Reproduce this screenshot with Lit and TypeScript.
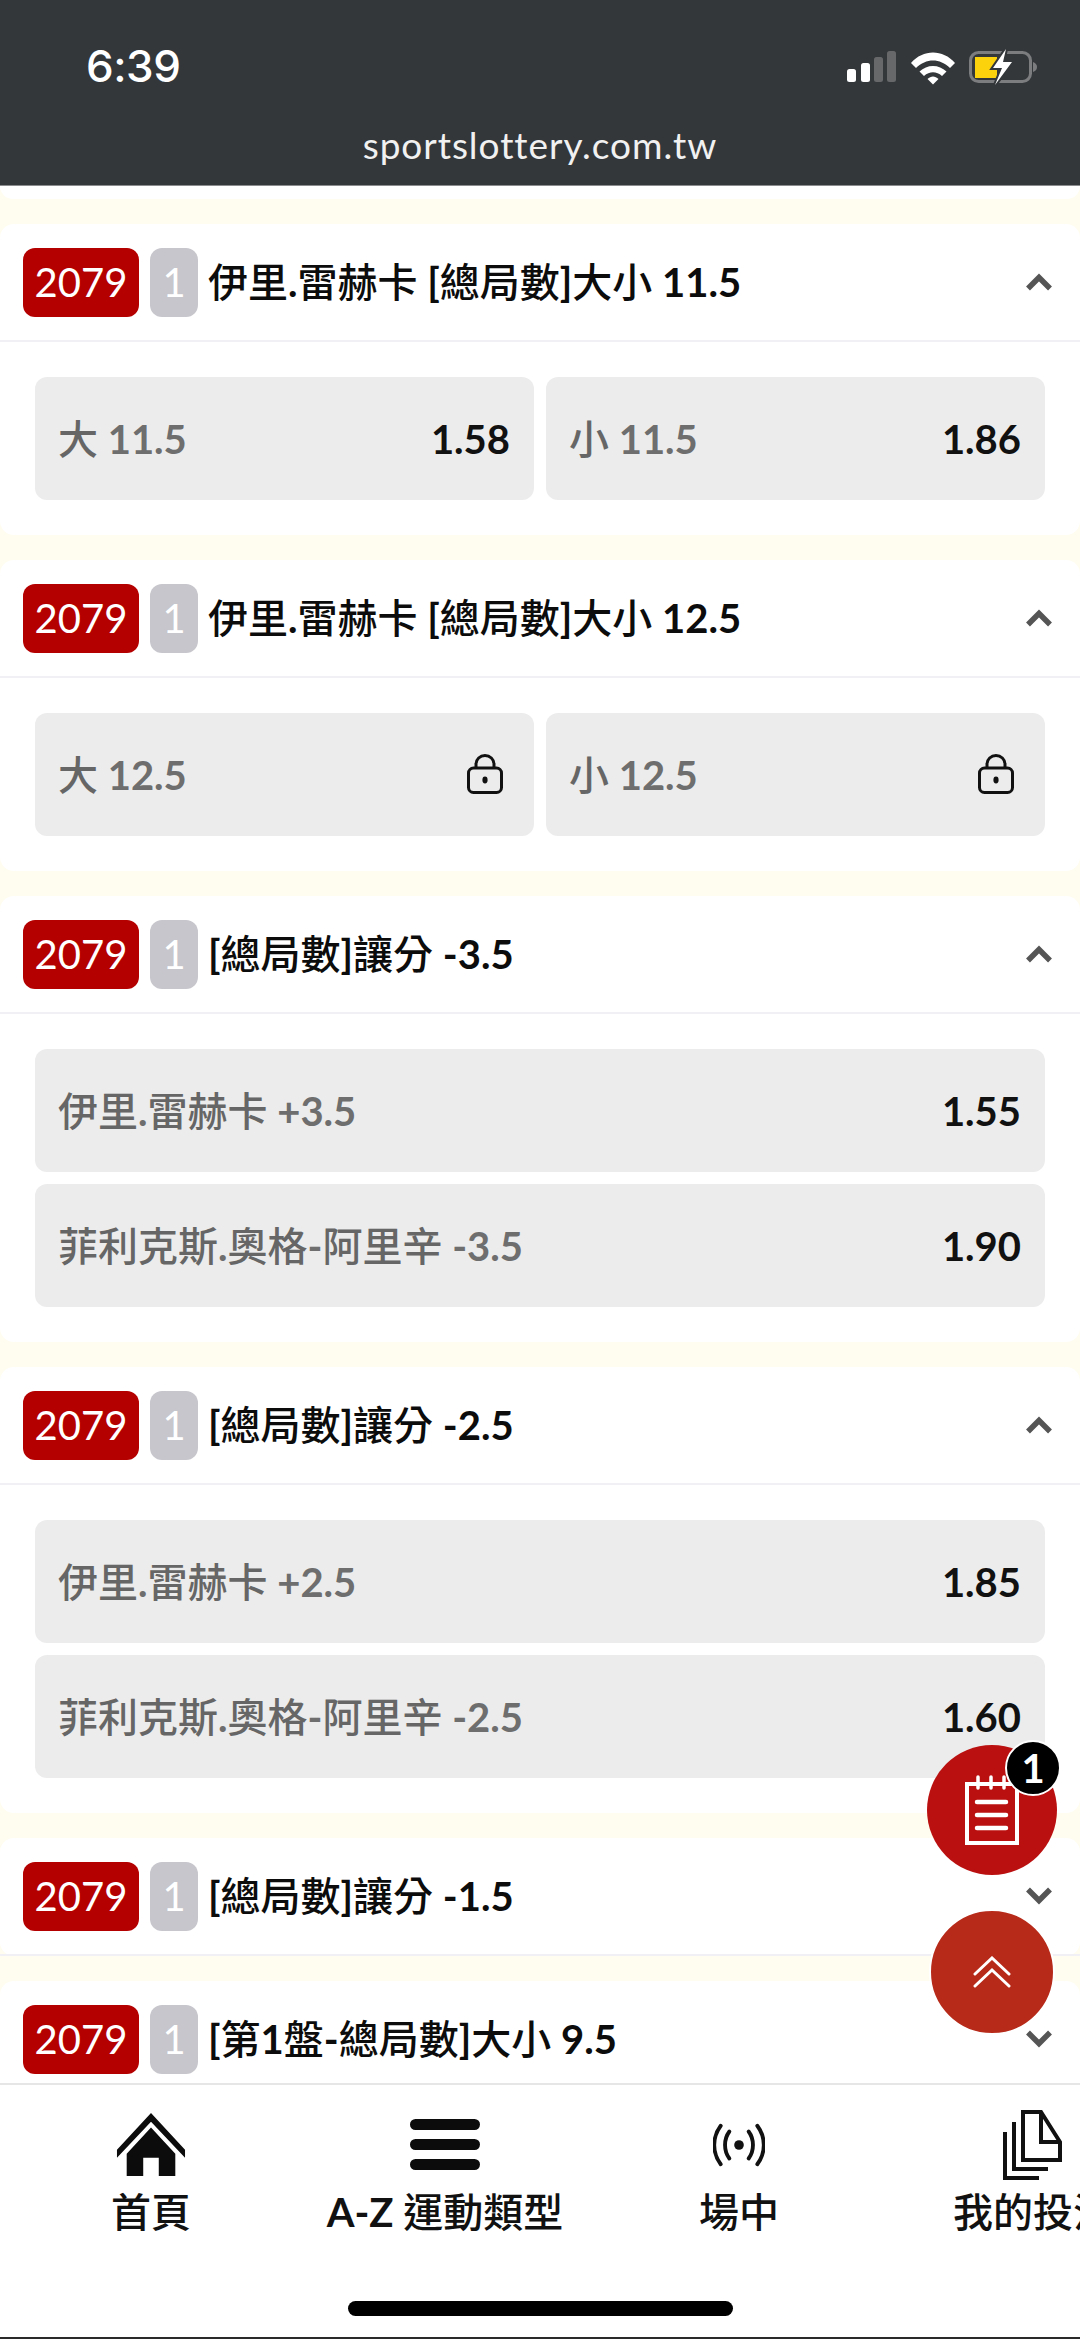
import { LitElement, html, css, svg } from "lit";
import { customElement } from "lit/decorators.js";

type Opt = { label: string; odds?: string };
type Market = { title: string; open: boolean; layout?: "row" | "col"; opts?: Opt[] };

const markets: Market[] = [
  { title: "伊里.雷赫卡 [總局數]大小 11.5", open: true, layout: "row", opts: [{ label: "大 11.5", odds: "1.58" }, { label: "小 11.5", odds: "1.86" }] },
  { title: "伊里.雷赫卡 [總局數]大小 12.5", open: true, layout: "row", opts: [{ label: "大 12.5" }, { label: "小 12.5" }] },
  { title: "[總局數]讓分 -3.5", open: true, layout: "col", opts: [{ label: "伊里.雷赫卡 +3.5", odds: "1.55" }, { label: "菲利克斯.奧格-阿里辛 -3.5", odds: "1.90" }] },
  { title: "[總局數]讓分 -2.5", open: true, layout: "col", opts: [{ label: "伊里.雷赫卡 +2.5", odds: "1.85" }, { label: "菲利克斯.奧格-阿里辛 -2.5", odds: "1.60" }] },
  { title: "[總局數]讓分 -1.5", open: false },
  { title: "[第1盤-總局數]大小 9.5", open: false },
];

/* Latin runs take Lato bold, CJK runs stay at the container's medium weight. */
const runs = (text: string) =>
  text.split(/([\u0020-\u007e]+)/).filter(Boolean).map((r) => (/^[\u0020-\u007e]+$/.test(r) ? html`<b>${r}</b>` : r));

const lock = svg`<svg class="lock" viewBox="0 0 36 40" width="36" height="40"><rect x="1.5" y="14" width="33" height="24.5" rx="5" fill="none" stroke="#111" stroke-width="3"/><path d="M9 14V10a9 8.5 0 0 1 18 0v4" fill="none" stroke="#111" stroke-width="3"/><ellipse cx="18" cy="26" rx="2.6" ry="3.4" fill="#111"/></svg>`;

@customElement("app-root")
export class AppRoot extends LitElement {
  static styles = css`
    :host { display: flex; flex-direction: column; position: relative; width: 1080px; height: 2339px; overflow: hidden; background: #fff;
      font-family: Lato, "Noto Sans CJK TC", sans-serif; color: #111; }
    .top { flex: none; height: 185px; background: #34373a; border-bottom: 1px solid #8a8c8e; box-sizing: content-box; display: flex; flex-direction: column; color: #fff; }
    .status { display: flex; align-items: center; justify-content: space-between; height: 50px; margin-top: 41px; padding: 0 41px 0 86px; }
    .time { font: 500 44px/50px Inter, sans-serif; letter-spacing: -0.5px; }
    .icons { display: flex; align-items: center; margin-top: 2px; }
    .url { text-align: center; font: 400 37px/44px Lato, sans-serif; letter-spacing: 0.95px; color: #f1f1f1; margin-top: 32px; }
    main { flex: 1; min-height: 0; overflow: hidden; background: #fffdf0; display: flex; flex-direction: column; gap: 25px; }
    .tail { flex: none; height: 13px; background: #fff; border-radius: 0 0 14px 14px; }
    .card { flex: none; background: #fff; border-radius: 14px; }
    .head { height: 116px; border-bottom: 2px solid #f0f0f5; display: flex; align-items: center; padding: 0 28px 0 23px; }
    .num, .set { flex: none; height: 69px; border-radius: 12px; color: #fff; display: flex; align-items: center; justify-content: center; font-size: 40px; box-sizing: border-box; }
    .num { width: 116px; background: #b50000; }
    .set { width: 48px; margin-left: 11px; background: #c6c6cc; }
    .title { flex: 1; margin-left: 10px; margin-top: -4px; font-size: 40px; font-weight: 500; white-space: nowrap; color: #0c0c0c; }
    .title b { font-weight: 700; }
    .body { padding: 35px; display: flex; gap: 12px; }
    .body.col { flex-direction: column; }
    .opt { flex: 1 0 123px; height: 123px; box-sizing: border-box; background: #ececec; border-radius: 12px; display: flex; align-items: center; justify-content: space-between; padding: 0 24px 0 23px; }
    .body.row .opt { flex: 1 1 0; }
    .label { font-size: 40px; font-weight: 500; color: #666; margin-top: -3px; }
    .label b { font-weight: 700; color: #6e6e6e; }
    .odds { font-size: 40px; font-weight: 700; color: #111; }
    .lock { margin: -2px 7px 0 0; display: block; }
    nav { flex: none; height: 256px; border-top: 2px solid #e6e6e6; background: #fff; position: relative; display: flex; padding-left: 4px; box-sizing: border-box; overflow: hidden; border-bottom: 2px solid #2a2a2a; }
    .tab { flex: none; width: 294px; height: 130px; margin-top: 22px; display: flex; flex-direction: column; align-items: center; }
    .ico { height: 76px; display: flex; align-items: center; justify-content: center; }
    .tab span { font-size: 40px; line-height: 46px; font-weight: 500; white-space: nowrap; margin-top: 6px; color: #111; }
    .tab span b { font-weight: 700; }
    .home-bar { position: absolute; left: 348px; bottom: 21px; width: 385px; height: 15px; border-radius: 8px; background: #000; }
    .fab { position: absolute; border-radius: 50%; display: flex; align-items: center; justify-content: center; }
    .fab.slip { left: 927px; top: 1745px; width: 130px; height: 130px; background: #bb1010; }
    .count { position: absolute; left: 1005px; top: 1740px; width: 56px; height: 56px; box-sizing: border-box; border: 2px solid #fff; border-radius: 50%; background: #000; color: #fff; font-size: 40px; font-weight: 700; display: flex; align-items: center; justify-content: center; }
    .fab.up { left: 929px; top: 1909px; width: 126px; height: 126px; box-sizing: border-box; border: 2px solid #fff; background: #b72a1a; }
  `;

  private chev(open: boolean) {
    return html`<svg width="26" height="18" viewBox="0 0 26 18"><path d=${open ? "M2 15.5 L13 4.5 L24 15.5" : "M2 2.5 L13 13.5 L24 2.5"} fill="none" stroke="#555" stroke-width="5.5"/></svg>`;
  }

  private card(m: Market) {
    return html`<section class="card">
      <div class="head"><div class="num">2079</div><div class="set">1</div><div class="title">${runs(m.title)}</div>${this.chev(m.open)}</div>
      ${m.open ? html`<div class="body ${m.layout}">${m.opts!.map((o) => html`<div class="opt"><span class="label">${runs(o.label)}</span>${o.odds ? html`<span class="odds">${o.odds}</span>` : lock}</div>`)}</div>` : ""}
    </section>`;
  }

  render() {
    return html`
      <header class="top">
        <div class="status">
          <div class="time">6:39</div>
          <div class="icons">
            <svg width="192" height="36" viewBox="0 0 192 36">
              <rect x="0" y="20" width="9" height="13" rx="2.5" fill="#fff"/><rect x="14" y="14" width="9" height="19" rx="2.5" fill="#fff"/>
              <rect x="27" y="8" width="9" height="25" rx="2.5" fill="#66686a"/><rect x="40" y="2" width="9" height="31" rx="2.5" fill="#66686a"/>
              <path d="M64 14 C76 0 96 0 108 14 L103 19 C93 9 79 9 69 19Z" fill="#fff"/><path d="M72.5 22.5 C80 15 92 15 99.5 22.5 L95 27 C89.5 22 82.5 22 77 27Z" fill="#fff"/><path d="M80.5 30 C84 26.5 88 26.5 91.5 30 L86 35.5Z" fill="#fff"/>
              <rect x="123.5" y="3.5" width="60" height="29" rx="8" fill="none" stroke="#7b7d7f" stroke-width="3"/>
              <path d="M186 13 C189 14 190 16 190 18 C190 20 189 22 186 23Z" fill="#7b7d7f"/>
              <path d="M128 8 H150 V29 H128 Z" fill="#fcd20c"/>
              <path d="M159 0 L146 19 H155 L148 36 L165 13 H156Z" fill="#fff" stroke="#34373a" stroke-width="4" paint-order="stroke"/>
            </svg>
          </div>
        </div>
        <div class="url">sportslottery.com.tw</div>
      </header>
      <main>
        <div class="tail"></div>
        ${markets.map((m) => this.card(m))}
      </main>
      <nav>
        <div class="tab"><div class="ico"><svg width="70" height="66" viewBox="0 0 72 66"><path d="M36 0 L71 38 V46 L36 9 L1 46 V38Z" fill="#0c0c0c"/><path d="M36 15 L61 42 V65 H44 V46 H28 V65 H11 V42Z" fill="#0c0c0c"/></svg></div><span>首頁</span></div>
        <div class="tab"><div class="ico"><svg width="70" height="52" viewBox="0 0 70 52"><rect y="0" width="70" height="11" rx="5.5" fill="#0c0c0c"/><rect y="20" width="70" height="11" rx="5.5" fill="#0c0c0c"/><rect y="40" width="70" height="11" rx="5.5" fill="#0c0c0c"/></svg></div><span>${runs("A-Z 運動類型")}</span></div>
        <div class="tab"><div class="ico"><svg width="52" height="44" viewBox="0 0 54 44" fill="none" stroke="#111" stroke-width="4" stroke-linecap="round"><circle cx="27" cy="22" r="5" fill="#111" stroke="none"/><path d="M17 8 C11 16 11 28 17 36"/><path d="M37 8 C43 16 43 28 37 36"/><path d="M8 2 C-1 14 -1 30 8 42"/><path d="M46 2 C55 14 55 30 46 42"/></svg></div><span>場中</span></div>
        <div class="tab"><div class="ico"><svg width="60" height="70" viewBox="0 0 60 70" fill="none" stroke="#111" stroke-width="4"><path d="M20 2 H38 L57 32 V50 H20Z"/><path d="M38 2 V32 H57"/><path d="M11 12 V59 H45"/><path d="M2 22 V68 H36"/></svg></div><span>我的投注</span></div>
        <div class="home-bar"></div>
      </nav>
      <div class="fab slip"><svg width="56" height="72" viewBox="0 0 56 72" fill="none" stroke="#fff"><path d="M3 10 H53 V69 H3Z" stroke-width="4"/><path d="M14 3 V14 M27 3 V14 M40 3 V14" stroke-width="3.5" stroke-linecap="round"/><path d="M13 28 H42 M13 41 H42 M13 54 H42" stroke-width="4.5" stroke-linecap="round"/></svg></div>
      <div class="count">1</div>
      <div class="fab up"><svg width="38" height="32" viewBox="0 0 38 32" fill="none" stroke="#fff" stroke-width="3" stroke-linecap="round"><path d="M2 18 L19 2 L36 18"/><path d="M2 30 L19 14 L36 30"/></svg></div>
    `;
  }
}
